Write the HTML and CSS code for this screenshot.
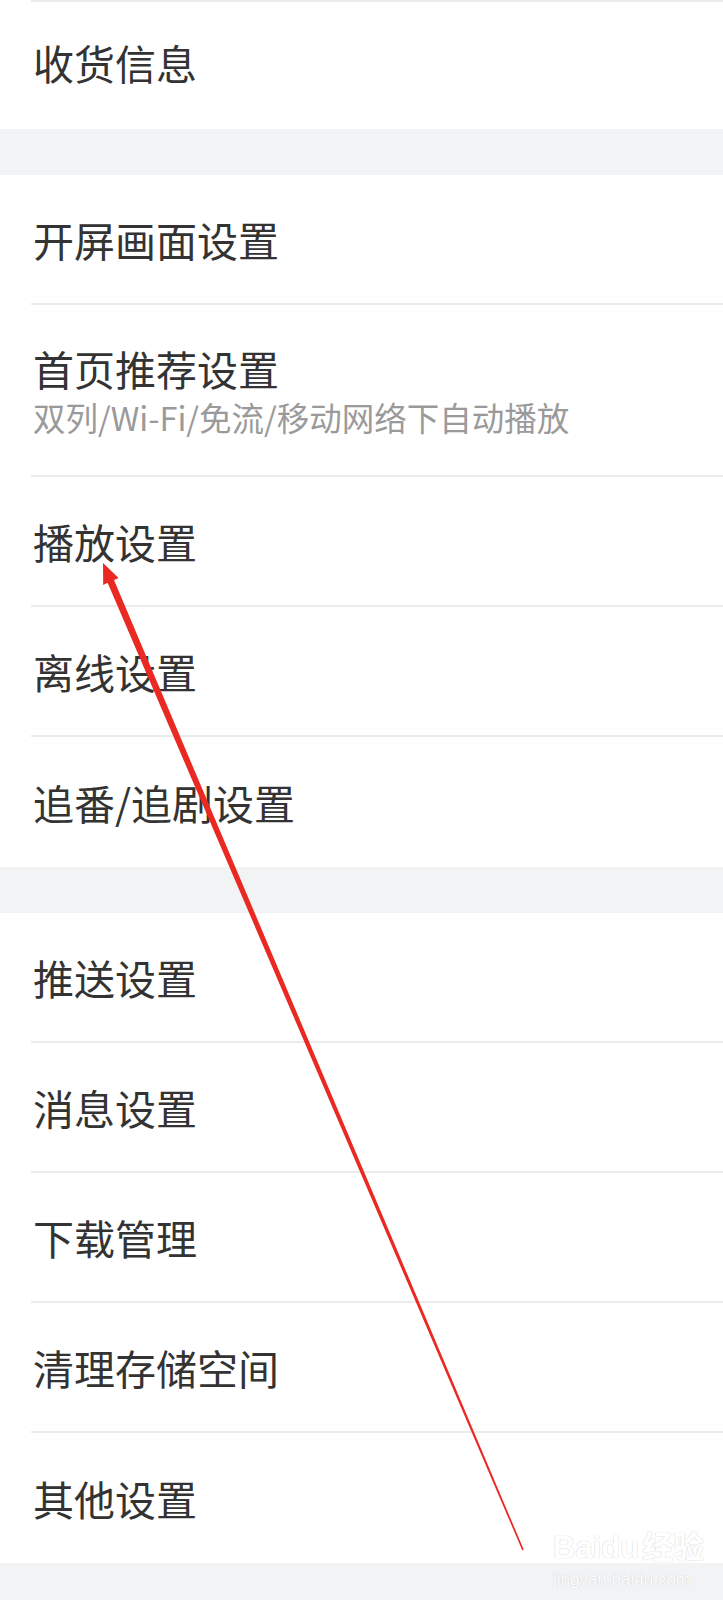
FILE: index.html
```html
<!DOCTYPE html>
<html lang="zh-CN">
<head>
    <meta charset="UTF-8">
    <meta name="viewport" content="width=device-width, initial-scale=1.0">
    <title>设置</title>
    <link rel="stylesheet" href="styles.css">
</head>
<body>
    <div class="page">
        <ul class="group group-top">
            <li class="row">收货信息</li>
        </ul>

        <div class="gap"></div>

        <ul class="group">
            <li class="row">开屏画面设置</li>
            <li class="row row-double">
                <span class="title">首页推荐设置</span>
                <span class="sub">双列/Wi-Fi/免流/移动网络下自动播放</span>
            </li>
            <li class="row">播放设置</li>
            <li class="row">离线设置</li>
            <li class="row">追番/追剧设置</li>
        </ul>

        <div class="gap"></div>

        <ul class="group">
            <li class="row">推送设置</li>
            <li class="row">消息设置</li>
            <li class="row">下载管理</li>
            <li class="row">清理存储空间</li>
            <li class="row">其他设置</li>
        </ul>

        <div class="gap gap-end"></div>

        <!-- annotation arrow drawn over the list -->
        <svg class="arrow" width="723" height="1600" viewBox="0 0 723 1600">
            <polygon fill="#ea2a22" points="522.3,1550.4 523.7,1549.6 114,580 118.6,578.1 103,563 103.2,585 107.6,582.8"/>
        </svg>

        <div class="watermark">
            <div class="wm-logo">Bai<span class="paw">du</span>经验</div>
            <div class="wm-url">jingyan.baidu.com</div>
        </div>
    </div>
</body>
</html>
```

FILE: styles.css
```css
body {
    margin: 0;
    padding: 0;
    background-color: #fff;
    font-family: "Noto Sans CJK SC", "Noto Sans", sans-serif;
    color: #333;
}

.page {
    position: relative;
    width: 723px;
    height: 1600px;
    overflow: hidden;
}

.group {
    list-style: none;
    margin: 0;
    padding: 0;
    background: #fff;
}

.row {
    display: flex;
    align-items: center;
    box-sizing: border-box;
    height: 130px;
    margin-left: 31px;
    padding-left: 2px;
    border-bottom: 2px solid #ebebeb;
    font-size: 41px;
}

.group li:last-child {
    border-bottom: none;
}

.group-top .row {
    height: 129px;
    border-top: 2px solid #ebebeb;
    padding-bottom: 8px;
}

.row-double {
    height: 172px;
    flex-direction: column;
    align-items: flex-start;
    justify-content: center;
    padding-top: 4px;
}

.row-double .title {
    line-height: 50px;
}

.row-double .sub {
    font-size: 32.5px;
    line-height: 48px;
    color: #9a9a9a;
}

.gap {
    height: 46px;
    background-color: #f2f3f5;
}

.gap-end {
    height: 40px;
}

.arrow {
    position: absolute;
    left: 0;
    top: 0;
    pointer-events: none;
}

.watermark {
    position: absolute;
    left: 553px;
    top: 1530px;
    color: #fff;
    text-shadow: 0 0 1px #d0d0d0, 0 0 1px #d0d0d0;
    font-family: "Liberation Sans", "Noto Sans CJK SC", sans-serif;
    opacity: 0.85;
}

.wm-logo {
    font-size: 31px;
    line-height: 36px;
    font-weight: bold;
}

.wm-logo .paw {
    margin-right: 3px;
}

.wm-url {
    font-size: 17px;
    line-height: 20px;
    margin-top: 4px;
}
```
